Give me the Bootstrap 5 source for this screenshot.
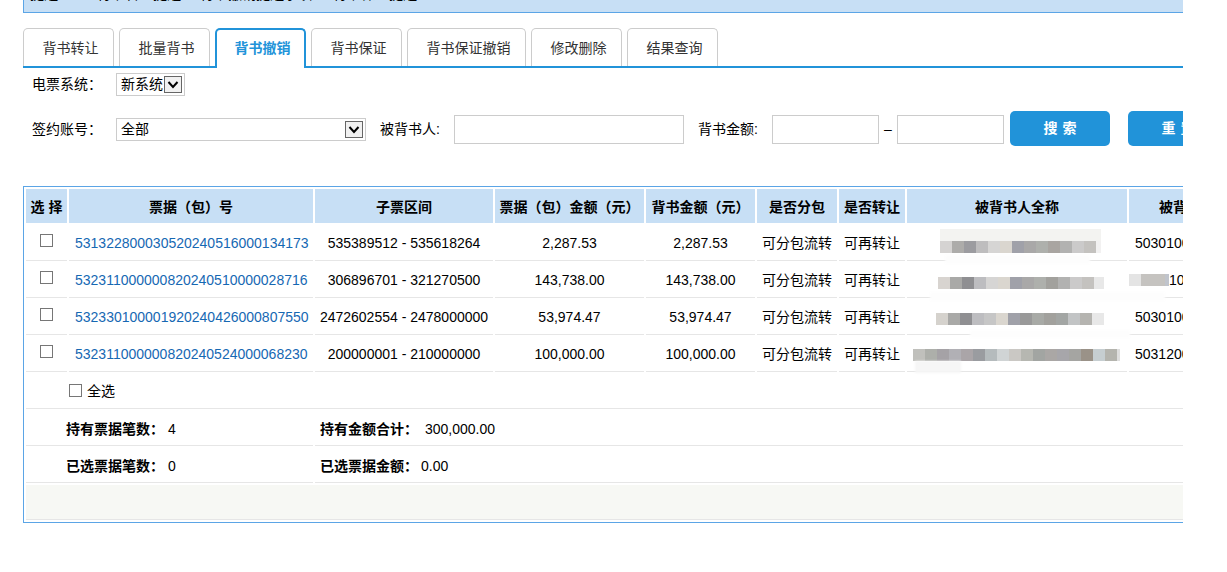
<!DOCTYPE html>
<html lang="zh-CN">
<head>
<meta charset="utf-8">
<title>背书撤销</title>
<link href="https://cdn.jsdelivr.net/npm/bootstrap@5.3.0/dist/css/bootstrap.min.css" rel="stylesheet">
<style>
html,body{height:100%;overflow:hidden}
body{background:#fff;color:#000;font:14px/1.4 "Liberation Sans","Noto Sans CJK SC",sans-serif}
.shell{width:1160px;margin-left:23px;overflow:hidden;height:572px}
.topbar{height:13px;background:#c7dff5;border-left:1px solid #5ba5e6;border-bottom:1px solid #5ba5e6;overflow:hidden;display:flex;align-items:flex-end;padding:0 0 10px 6px;font-size:14px;line-height:16px;white-space:nowrap}
.topbar span{flex:none}
.tb1{width:67px}.tb2{width:103px}.tb3{width:133px}
.tabrow{display:flex;gap:5px;margin-top:15px;height:40px;border-bottom:2px solid #2193d9}
.tabitem{display:flex;align-items:center;justify-content:center;height:38px;width:91px;flex:none;background:#fff;color:#333;border:1px solid #ccc;border-bottom:0;border-radius:5px 5px 0 0;padding:2px 0 0 4px}
.tabitem.t119{width:119px}
.tabitem.on{height:40px;color:#2193d9;font-weight:700;border:2px solid #2193d9;border-bottom:0;background:#fff;position:relative;z-index:1;padding-bottom:2px}
.filter{display:flex;align-items:center;color:#000;white-space:nowrap}
.f1{height:33px}
.f2{height:37px;margin-top:10px}
.lbl{width:93px;padding-left:9px;flex:none}
.lbl2{margin:0 14px;width:60px;flex:none}
.sel{appearance:none;-webkit-appearance:none;flex:none;border:1px solid #ccc;border-radius:0;height:23px;padding:0 0 2px 4px;font:14px "Liberation Sans","Noto Sans CJK SC",sans-serif;color:#000;background:#fff url("data:image/svg+xml,%3Csvg xmlns='http://www.w3.org/2000/svg' width='18' height='17'%3E%3Crect x='.5' y='.5' width='17' height='16' fill='%23f1f1f1' stroke='%23666'/%3E%3Cpath d='M4.5 6l4.5 5 4.5-5' fill='none' stroke='%23000' stroke-width='2'/%3E%3C/svg%3E") no-repeat right 2px center}
.sel1{width:69px}.sel2{width:250px}
.txt{border:1px solid #ccc;height:29px;background:#fff;padding:0 4px;border-radius:0;outline:0;flex:none}
.w230{width:230px}.w107{width:107px}
.dash{width:18px;text-align:center;flex:none}
.bluebtn{background:#2193d9;color:#fff;border:0;border-radius:5px;height:35px;width:100px;font-weight:700;letter-spacing:5px;font-size:14px;padding:0 0 0 5px;flex:none;align-self:flex-start}
.bluebtn:hover{background:#2193d9;color:#fff}
.gapl{margin-left:6px}.gapr{margin-left:18px}
.billframe{margin-top:38px;border:1px solid #5ba5e6;height:337px;width:1300px;overflow:hidden}
table.bills{border-collapse:separate;border-spacing:2px;table-layout:fixed;width:1251px;margin:0;color:#000}
.bills col:nth-child(1){width:41px}.bills col:nth-child(2){width:244px}.bills col:nth-child(3){width:178px}.bills col:nth-child(4){width:149px}.bills col:nth-child(5){width:109px}.bills col:nth-child(6){width:80px}.bills col:nth-child(7){width:66px}.bills col:nth-child(8){width:220px}.bills col:nth-child(9){width:144px}
.bills th{background:#c7dff5;height:35px;text-align:center;font-weight:700;padding:3px 0 0;border-bottom:1px solid #fff;white-space:nowrap;vertical-align:middle}
.bills td{height:35px;padding:1px 0 0;text-align:center;border-bottom:1px solid #e6e6e6;white-space:nowrap;vertical-align:middle;overflow:hidden}
.bills td.le{text-align:left;padding-left:6px}
.bills a{color:#1668b3;text-decoration:none}
.chk{appearance:none;-webkit-appearance:none;width:13px;height:13px;border:1px solid #767676;background:#fff;margin:0;display:inline-block;vertical-align:1px;border-radius:0}
.blurcell{display:block;height:12px}
.bl1{margin:6px 0 0 33px;width:161px;box-shadow:0 -12px 0 #f3f3f1;background:linear-gradient(90deg,#d5d3d2 0 12px,#adacaa 12px 24px,#9c9ca0 24px 36px,#bebdbe 36px 48px,#d6d5d4 48px 60px,#dad6cf 60px 72px,#a0a1a9 72px 84px,#a9a8a8 84px 96px,#aeb0ac 96px 108px,#a9a5a1 108px 120px,#b2b2b1 120px 132px,#cbcaca 132px 144px,#c4c2bf 144px 156px,#f2f1f1 156px)}
.bl2{margin:4px 0 0 31px;width:166px;background:linear-gradient(90deg,#d8d4d0 0 12px,#a9a9a7 12px 24px,#8f8f92 24px 36px,#bdbdc0 36px 48px,#d6d5d4 48px 60px,#dad6cf 60px 72px,#a0a1a9 72px 84px,#a9a8a8 84px 96px,#aeb0ac 96px 108px,#a2a19d 108px 120px,#b2b2b1 120px 132px,#cbcaca 132px 144px,#c4c2bf 144px 156px,#e8e8e8 156px)}
.bl3{margin:2px 0 0 29px;width:168px;background:linear-gradient(90deg,#d5d2cd 0 12px,#a9a9a7 12px 24px,#8f8f92 24px 36px,#bdbdc0 36px 48px,#c6c6c6 48px 60px,#dad6cf 60px 72px,#a0a1a9 72px 84px,#999 84px 96px,#a8aaa6 96px 108px,#a2a19d 108px 120px,#a3a6a4 120px 132px,#c2c4c5 132px 144px,#b5b4b0 144px 156px,#e8e8e8 156px)}
.bl4{margin:0 0 0 6px;width:207px;background:linear-gradient(90deg,#c0c0bc 0 12px,#adafaa 12px 24px,#a5a2a6 24px 36px,#b1b0b5 36px 48px,#aaa5a8 48px 60px,#9a9ca0 60px 72px,#b5bbbd 72px 84px,#d0d4d5 84px 96px,#cac8c4 96px 108px,#b6b7b1 108px 120px,#a2a5a2 120px 132px,#aaa7a5 132px 144px,#a7a6aa 144px 156px,#a5a5a2 156px 168px,#9a9288 168px 180px,#c6ced1 180px 192px,#b4b4ae 192px 204px,#dedede 204px)}
.mosaicnum{display:inline-block;height:12px;width:40px;margin-left:-6px;vertical-align:-1px;background:linear-gradient(90deg,#e4e4e4 0 12px,#c5c3c0 12px 36px,#c0c4cc 36px)}
.sumlabel{font-weight:700}
.bills td.lft{text-align:left;padding-top:3px}
.bills td.p1{padding-left:40px}
.bills td.p2{padding-left:5px}
.v4{margin-left:4px}.v7{margin-left:7px}.v3{margin-left:3px}
.allcell label{display:inline-flex;align-items:center;gap:5px;margin-left:43px}
.allcell .chk{margin-top:-2px}
.bills td.pale{background:#f7f8f4}
.smear{position:absolute;background:#fdfdfd;filter:blur(1px)}
.s1{left:921px;top:68px;width:145px;height:9px}
.s2{left:906px;top:105px;width:235px;height:9px}
.s3{left:946px;top:143px;width:160px;height:8px}
.s4{left:891px;top:174px;width:46px;height:12px;background:#f6f6f6}
</style>
</head>
<body>
<div class="shell">
  <div class="topbar"><span class="tb1">提醒：</span><span class="tb2">背书转让提醒</span><span class="tb3">背书撤销提醒事项</span><span>背书保证提醒</span></div>
  <div class="tabrow">
    <div class="tabitem">背书转让</div>
    <div class="tabitem">批量背书</div>
    <div class="tabitem on">背书撤销</div>
    <div class="tabitem">背书保证</div>
    <div class="tabitem t119">背书保证撤销</div>
    <div class="tabitem">修改删除</div>
    <div class="tabitem">结果查询</div>
  </div>
  <div class="filter f1">
    <span class="lbl">电票系统：</span>
    <select class="sel sel1"><option>新系统</option></select>
  </div>
  <div class="filter f2">
    <span class="lbl">签约账号：</span>
    <select class="sel sel2"><option>全部</option></select>
    <span class="lbl2">被背书人:</span>
    <input class="txt w230" type="text">
    <span class="lbl2">背书金额:</span>
    <input class="txt w107" type="text">
    <span class="dash">–</span>
    <input class="txt w107" type="text">
    <button class="btn bluebtn gapl" type="button">搜索</button>
    <button class="btn bluebtn gapr" type="button">重置</button>
  </div>
  <div class="billframe position-relative">
    <table class="bills">
      <colgroup><col><col><col><col><col><col><col><col><col></colgroup>
      <thead>
        <tr><th>选 择</th><th>票据（包）号</th><th>子票区间</th><th>票据（包）金额（元）</th><th>背书金额（元）</th><th>是否分包</th><th>是否转让</th><th>被背书人全称</th><th>被背书人账号</th></tr>
      </thead>
      <tbody>
        <tr><td><input class="chk" type="checkbox"></td><td class="le"><a href="#">531322800030520240516000134173</a></td><td>535389512 - 535618264</td><td>2,287.53</td><td>2,287.53</td><td>可分包流转</td><td>可再转让</td><td><span class="blurcell bl1"></span></td><td class="le">50301000000</td></tr>
        <tr><td><input class="chk" type="checkbox"></td><td class="le"><a href="#">532311000000820240510000028716</a></td><td>306896701 - 321270500</td><td>143,738.00</td><td>143,738.00</td><td>可分包流转</td><td>可再转让</td><td><span class="blurcell bl2"></span></td><td class="le"><span class="mosaicnum"></span>100000</td></tr>
        <tr><td><input class="chk" type="checkbox"></td><td class="le"><a href="#">532330100001920240426000807550</a></td><td>2472602554 - 2478000000</td><td>53,974.47</td><td>53,974.47</td><td>可分包流转</td><td>可再转让</td><td><span class="blurcell bl3"></span></td><td class="le">50301000000</td></tr>
        <tr><td><input class="chk" type="checkbox"></td><td class="le"><a href="#">532311000000820240524000068230</a></td><td>200000001 - 210000000</td><td>100,000.00</td><td>100,000.00</td><td>可分包流转</td><td>可再转让</td><td><span class="blurcell bl4"></span></td><td class="le">50312000000</td></tr>
        <tr><td colspan="9" class="allcell lft"><label><input class="chk" type="checkbox">全选</label></td></tr>
        <tr><td colspan="2" class="lft p1"><span class="sumlabel">持有票据笔数：</span><span class="v4">4</span></td><td colspan="7" class="lft p2"><span class="sumlabel">持有金额合计：</span><span class="v7">300,000.00</span></td></tr>
        <tr><td colspan="2" class="lft p1"><span class="sumlabel">已选票据笔数：</span><span class="v4">0</span></td><td colspan="7" class="lft p2"><span class="sumlabel">已选票据金额：</span><span class="v3">0.00</span></td></tr>
        <tr><td colspan="9" class="pale"></td></tr>
      </tbody>
    </table>
    <div class="smear s1"></div><div class="smear s2"></div><div class="smear s3"></div><div class="smear s4"></div>
  </div>
</div>
<script src="https://cdn.jsdelivr.net/npm/bootstrap@5.3.0/dist/js/bootstrap.bundle.min.js"></script>
</body>
</html>
